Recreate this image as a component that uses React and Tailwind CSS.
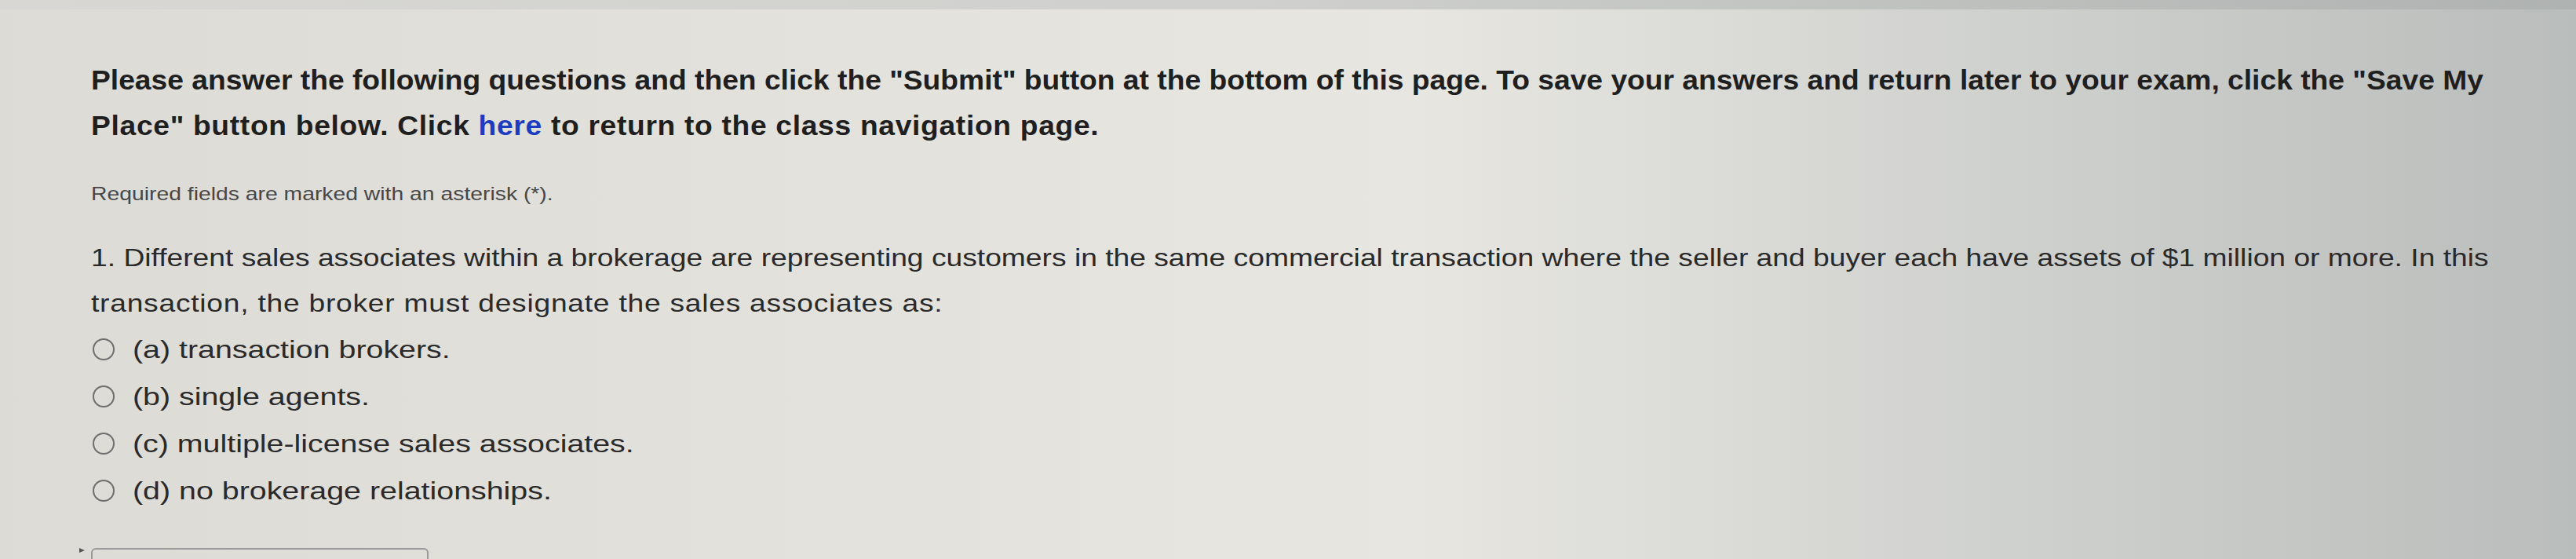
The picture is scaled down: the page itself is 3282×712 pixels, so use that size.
import React from 'react';

const options = [
  '(a) transaction brokers.',
  '(b) single agents.',
  '(c) multiple-license sales associates.',
  '(d) no brokerage relationships.',
];

export default function App() {
  return (
    <div
      className="h-[712px] w-full overflow-hidden bg-linear-to-r from-[#dcdbd6] via-[#e7e6e1] via-55% to-[#b9bdbb] text-[#222]"
      style={{ fontFamily: '"Liberation Sans", Arial, sans-serif' }}
    >
      <div className="h-[12px] w-full bg-linear-to-r from-[#d8d7d3] via-[#cfd0cd] to-[#aeb2b0]" />

      <div className="pl-[116px] pt-[61px]">
        {/* the photo is stretched sideways, widest on the left */}
        <p className="w-[2960px] origin-left scale-x-[1.063] text-[35px] leading-[58px] font-bold text-[#1f1f1f]">
          Please answer the following questions and then click the "Submit" button at the bottom of this page. To save your answers and return later to your exam, click the "Save My{' '}
          <span className="tracking-[0.64px]">
            Place" button below. Click <a href="#" className="text-[#1d3cbf]">here</a> to return to the class navigation page.
          </span>
        </p>

        <p className="mt-[43px] w-[600px] origin-left scale-x-[1.18] text-[24px] leading-[30px] text-[#474747]">
          Required fields are marked with an asterisk (*).
        </p>

        <div className="mt-[37px]">
          <p className="w-[2700px] origin-left scale-x-[1.163] text-[32px] leading-[58px] text-[#2a2a2a]">
            1. Different sales associates within a brokerage are representing customers in the same commercial transaction where the seller and buyer each have assets of $1 million or more. In this{' '}
            <span className="tracking-[0.64px]">transaction, the broker must designate the sales associates as:</span>
          </p>
          <ul className="flex flex-col">
            {options.map((opt) => (
              <li key={opt} className="flex items-center gap-[23px] pl-[2px] h-[60px] text-[32px] text-[#2a2a2a]">
                <span className="block w-[28px] h-[28px] shrink-0 rounded-full border-2 border-[#6e6e6e]" />
                <span className="inline-block origin-left scale-x-[1.23]">{opt}</span>
              </li>
            ))}
          </ul>
        </div>

        <div className="mt-[43px] flex items-start">
          <svg width="10" height="10" viewBox="0 0 10 10" className="-ml-[16px] mr-[6px] -mt-[2px]">
            <path d="M1 2 L8 5 L1 8 Z" fill="#555" />
          </svg>
          <div className="w-[430px] h-[40px] rounded-[6px] border-2 border-[#9a9a9a]" />
        </div>
      </div>
    </div>
  );
}
